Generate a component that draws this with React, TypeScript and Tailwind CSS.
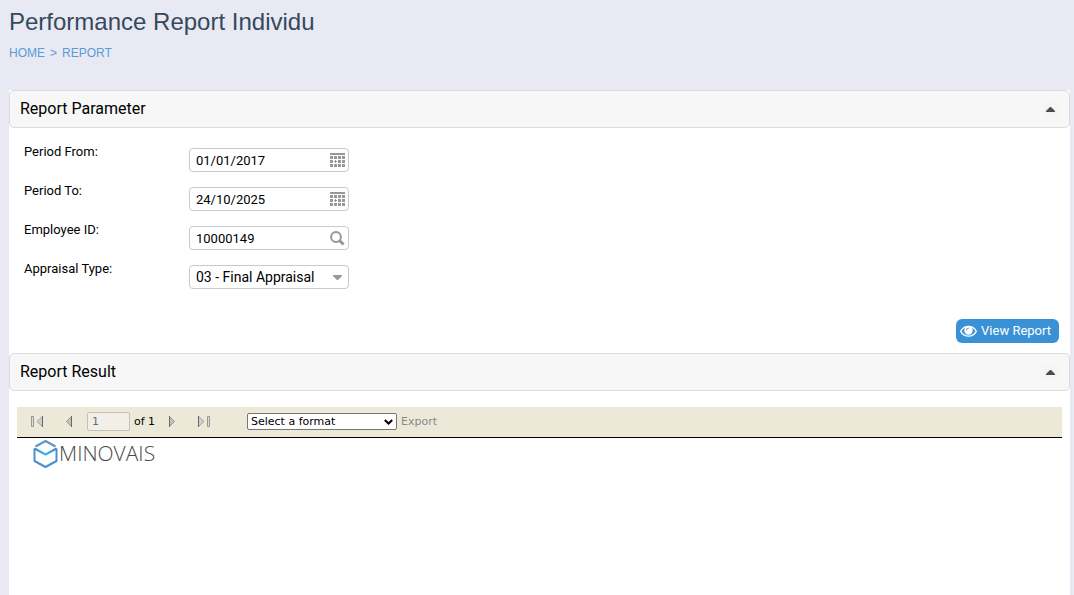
import { useState, type ReactNode } from 'react'

const inputClass =
  'block h-6 w-40 rounded border border-[#c9c9c9] bg-white pl-1.5 pr-6 text-black outline-none'

function CalendarIcon() {
  return (
    <svg className="h-[15px] w-[15px]" viewBox="0 0 15 15" fill="#989898" shapeRendering="crispEdges">
      <path d="M0 0h15v2H0z" />
      <path d="M0 3h3v3H0zM4 3h3v3H4zM8 3h3v3H8zM12 3h3v3h-3z" />
      <path d="M0 7h3v3H0zM8 7h3v3H8zM12 7h3v3h-3zM5 7h1v1h1v1H6v1H5V9H4V8h1z" />
      <path d="M0 11h3v3H0zM4 11h3v3H4zM8 11h3v3H8zM12 11h3v3h-3z" />
    </svg>
  )
}

function SearchIcon() {
  return (
    <svg className="h-[15px] w-[15px]" viewBox="0 0 15 15" fill="none" stroke="#989898">
      <circle cx="6" cy="6" r="4.900" strokeWidth="2" />
      <path d="M9.600 9.600l4 3.900" strokeWidth="3" />
    </svg>
  )
}

function Field({ id, label, icon, children }: { id: string; label: string; icon: ReactNode; children: ReactNode }) {
  return (
    <div className="flex h-6 items-start">
      <label htmlFor={id} className="-mt-1.5 w-[165px] shrink-0 text-[13px] leading-5">
        {label}
      </label>
      <div className="relative h-6">
        {children}
        <span className="pointer-events-none absolute inset-y-0 right-1 flex w-[15px] items-center justify-center">
          {icon}
        </span>
      </div>
    </div>
  )
}

function Panel({ title, children }: { title: string; children: ReactNode }) {
  const [open, setOpen] = useState(true)

  return (
    <section>
      <div className="flex h-[38px] items-center justify-between rounded-[5px] border border-[#dadbdc] bg-[#f7f7f7] pl-2.5 pr-2.5">
        <h2 className="text-[16px]">{title}</h2>
        <button
          type="button"
          aria-label={title}
          aria-expanded={open}
          onClick={() => setOpen(!open)}
          className="flex h-4 w-4 items-center justify-center bg-[#f5f5f5]"
        >
          <svg className={open ? 'h-[6px] w-[10px]' : 'h-[6px] w-[10px] rotate-180'} viewBox="0 0 10 6" fill="#4a4e52">
            <path d="M4 1h1l4 4v1H0V5z" />
          </svg>
        </button>
      </div>
      {open && children}
    </section>
  )
}

// pager arrows of the report toolbar
function PagerButton({ label, flip, bar }: { label: string; flip?: boolean; bar?: boolean }) {
  return (
    <button type="button" aria-label={label} className="flex h-4 w-4 items-center justify-center">
      <svg className={flip ? 'h-3 w-3 -scale-x-100' : 'h-3 w-3'} viewBox="0 0 12 12">
        {bar ? (
          <>
            <path d="M.5 .5h2v10h-2z" fill="#dcdcdc" stroke="#858585" strokeWidth="0.800" />
            <path d="M11.500 .5v10L6 5.500z" fill="#d0d0d0" stroke="#929292" strokeWidth="0.800" />
            <path d="M11.500 0v11" stroke="#686868" />
          </>
        ) : (
          <>
            <path d="M8.500 .5v10L3.500 5.500z" fill="#c0c0c0" stroke="#858585" strokeWidth="0.800" />
            <path d="M8.500 0v11" stroke="#686868" />
          </>
        )}
      </svg>
    </button>
  )
}

function Logo() {
  return (
    <div className="flex h-7 items-center">
      <svg className="h-7 w-[26px]" viewBox="0 0 26 28" fill="none" strokeWidth="2" strokeLinejoin="round">
        <defs>
          <linearGradient id="flap" x1="0" x2="1">
            <stop offset="0" stopColor="#4388c9" />
            <stop offset=".5" stopColor="#32b8ee" />
            <stop offset="1" stopColor="#4388c9" />
          </linearGradient>
        </defs>
        <path d="M1.500 8.500v12.500L12.500 27l11-6V8.500" stroke="#4d8fca" />
        <path d="M2.500 6.500L12.500 1l10 5.500" stroke="#5a96ce" />
        <path d="M1.500 8.500L12.500 14.500l11-6" stroke="url(#flap)" />
      </svg>
      <span className="font-['Open_Sans',sans-serif] text-[21px] font-light text-[#4a4a4a]">MINOVAIS</span>
    </div>
  )
}

export default function App() {
  return (
    <div className="flex min-h-screen flex-col bg-[#e8e9f2] pl-[9px] pr-1 font-[Roboto,sans-serif] text-black">
      <header className="h-[90px] font-['Liberation_Sans',sans-serif]">
        <h1 className="pt-1.5 text-[24px] leading-8 text-[#34495e]">Performance Report Individu</h1>
        <nav className="mt-[5px] flex gap-[5px] text-[12px] leading-5 text-[#5b9bd9]">
          <a href="#home">HOME</a>
          <span>&gt;</span>
          <a href="#report">REPORT</a>
        </nav>
      </header>

      <main className="flex-1 bg-white">
        <Panel title="Report Parameter">
          <form onSubmit={(e) => e.preventDefault()} className="px-[15px] pt-5">
            <div className="flex flex-col gap-[15px]">
              <Field id="from" label="Period From:" icon={<CalendarIcon />}>
                <input id="from" type="text" defaultValue="01/01/2017" className={`${inputClass} text-[13px]`} />
              </Field>
              <Field id="to" label="Period To:" icon={<CalendarIcon />}>
                <input id="to" type="text" defaultValue="24/10/2025" className={`${inputClass} text-[13px]`} />
              </Field>
              <Field id="employee" label="Employee ID:" icon={<SearchIcon />}>
                <input id="employee" type="text" defaultValue="10000149" className={`${inputClass} text-[13px]`} />
              </Field>
              <Field
                id="type"
                label="Appraisal Type:"
                icon={
                  <svg className="h-[5px] w-[9px]" viewBox="0 0 9 5" fill="#989898">
                    <path d="M0 0h9v1L5 5H4L0 1z" />
                  </svg>
                }
              >
                <select id="type" className={`${inputClass} appearance-none text-[14px]`}>
                  <option>03 - Final Appraisal</option>
                </select>
              </Field>
            </div>
            <div className="-mr-1 mb-2.5 mt-[30px] flex justify-end">
              <button
                type="submit"
                className="flex h-6 items-center gap-1 rounded-md bg-[#3a92d6] pl-1 pr-2 text-[13px] text-white"
              >
                <svg className="h-4 w-[17px]" viewBox="0 0 17 16">
                  <path d="M.7 8.300C4.200 1.700 12.800 1.700 16.300 8.300C12.800 14.700 4.200 14.700.7 8.300z" fill="none" stroke="#fff" strokeWidth="1.400" />
                  <circle cx="8.500" cy="7.500" r="4.200" fill="#fff" />
                  <path d="M6.300 7.200a2.300 2.300 0 012.200-2.200" fill="none" stroke="#3a92d6" strokeWidth="0.900" strokeLinecap="round" />
                </svg>
                View Report
              </button>
            </div>
          </form>
        </Panel>

        <Panel title="Report Result">
          <div className="px-2 pt-4 font-['DejaVu_Sans',sans-serif] text-[11px]">
            <div className="flex h-[31px] items-center border-b border-black bg-[#ece9d8] pb-px pl-3">
              <PagerButton label="First page" bar />
              <div className="ml-4 flex">
                <PagerButton label="Previous page" />
              </div>
              <input
                type="text"
                aria-label="Page"
                defaultValue="1"
                disabled
                className="ml-2.5 h-[19px] w-[43px] rounded-xs border border-[#c5c3b8] bg-[#f1efe7] px-1 text-[#6d6d6d]"
              />
              <span className="ml-1 w-[26px] whitespace-nowrap leading-4">of 1</span>
              <div className="ml-1 flex gap-4">
                <PagerButton label="Next page" flip />
                <PagerButton label="Last page" flip bar />
              </div>
              <div className="relative ml-[35px] h-[17px]">
                <select
                  aria-label="Export format"
                  className="block h-[17px] w-[150px] appearance-none rounded-xs border border-[#767676] bg-white px-[3px] leading-[15px]"
                >
                  <option>Select a format</option>
                </select>
                <svg className="pointer-events-none absolute right-1 top-1.5 h-[6px] w-[9px]" viewBox="0 0 9 6">
                  <path d="M.8 1l3.700 3.500L8.200 1" fill="none" stroke="#000" strokeWidth="2" />
                </svg>
              </div>
              <a href="#export" className="ml-1 leading-4 text-[#8a8a8a]">
                Export
              </a>
            </div>
            <div className="pl-4 pt-0.5">
              <Logo />
            </div>
          </div>
        </Panel>
      </main>
    </div>
  )
}
